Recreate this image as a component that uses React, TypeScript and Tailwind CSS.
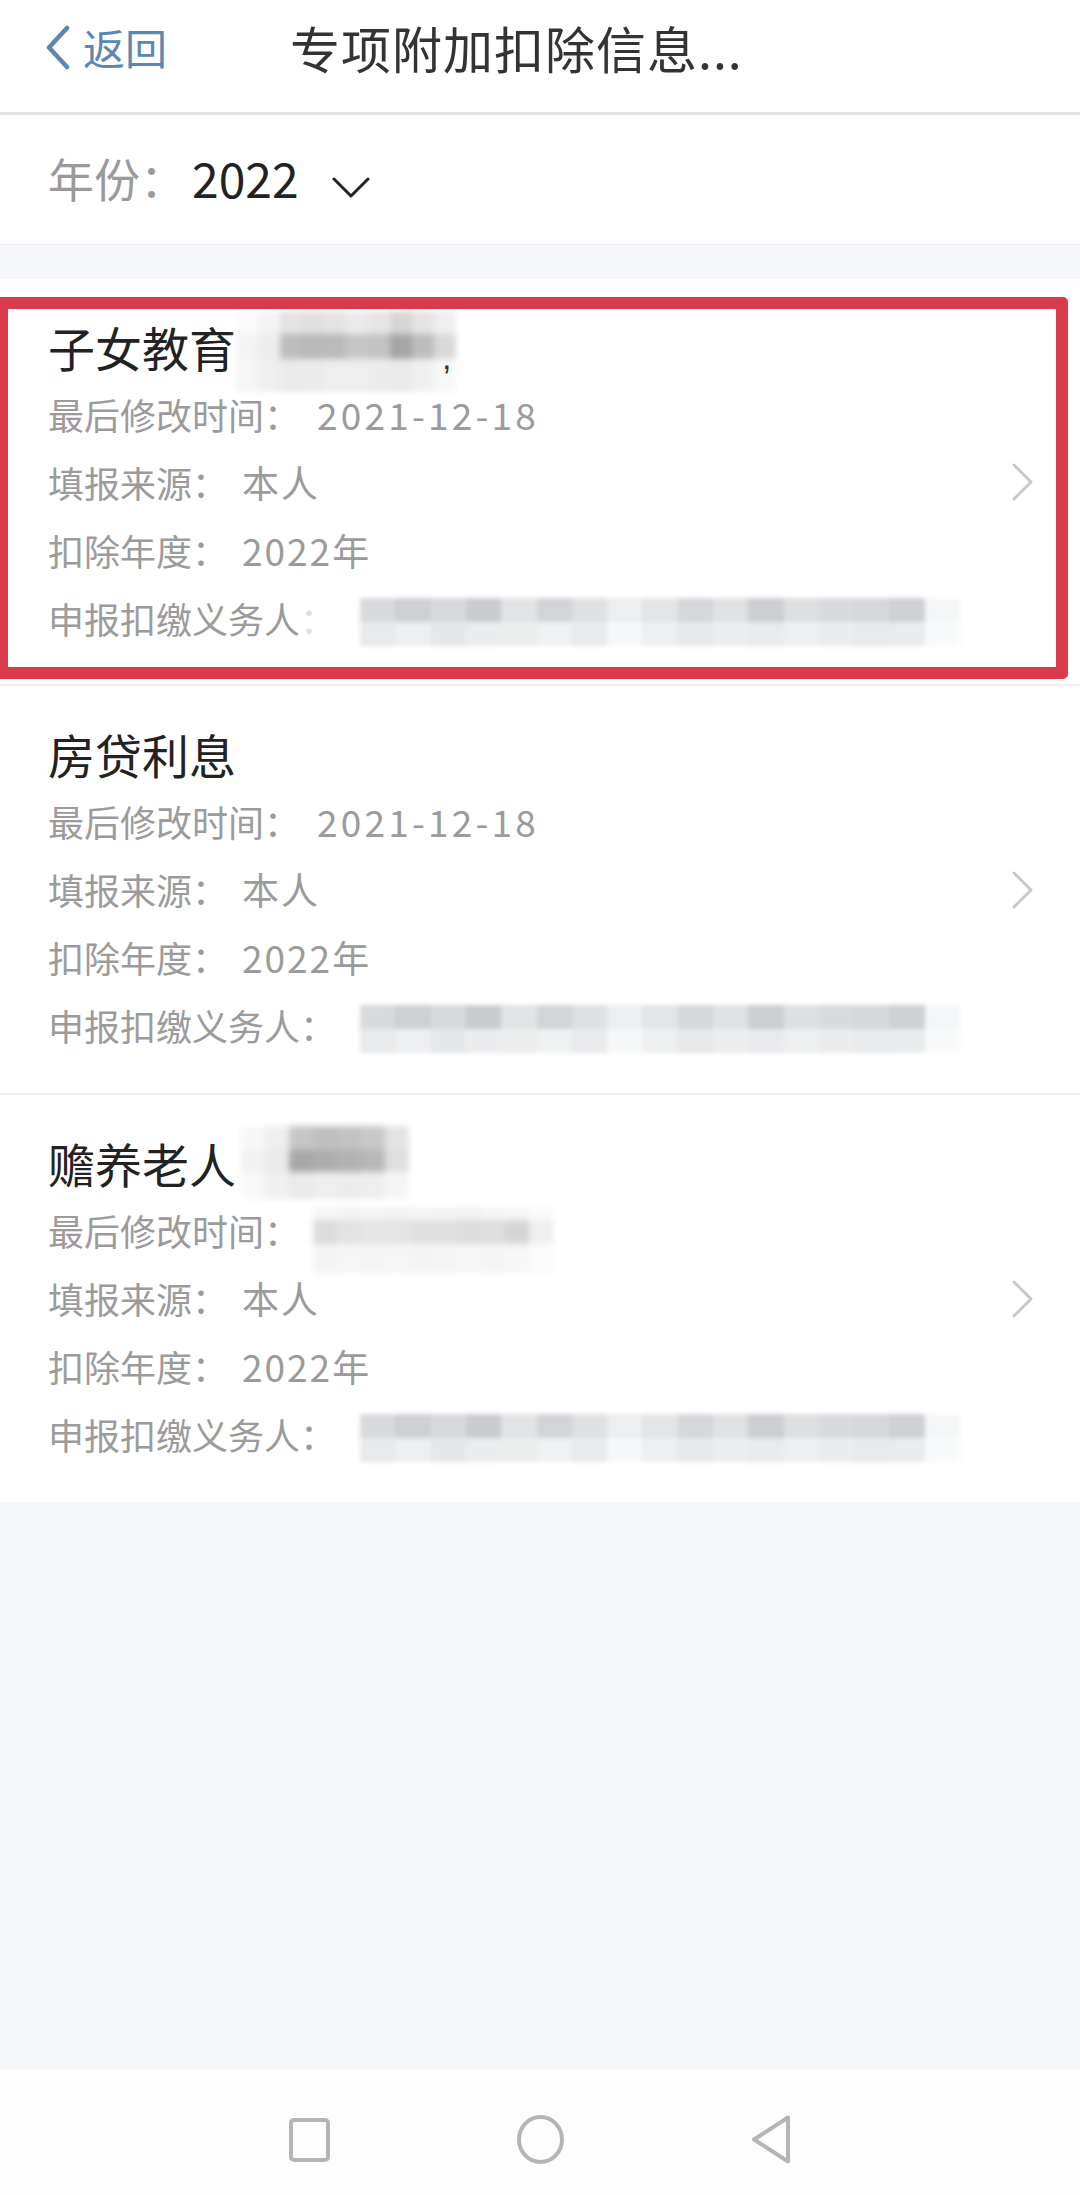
import React from 'react';

type MosaicRow = { h: string; cells: string[] };

function Mosaic({ grid, className }: { grid: MosaicRow[]; className: string }) {
  return (
    <div className={'flex shrink-0 flex-col ' + className}>
      {grid.map((r, i) => (
        <div key={i} className={'flex ' + r.h}>
          {r.cells.map((c, j) => (
            <div key={j} className={'flex-1 ' + c} />
          ))}
        </div>
      ))}
    </div>
  );
}

const titleMosaic1: MosaicRow[] = [
  {
    h: 'h-[23px]',
    cells: ['bg-[#fafafa]', 'bg-[#f4f4f4]', 'bg-[#e3e3e3]', 'bg-[#e0e0e0]', 'bg-[#e3e3e3]', 'bg-[#ebebeb]', 'bg-[#e6e6e6]', 'bg-[#d6d6d6]', 'bg-[#e4e4e4]', 'bg-[#efefef]'],
  },
  {
    h: 'h-[25px]',
    cells: ['bg-[#f4f4f4]', 'bg-[#ededed]', 'bg-[#bdbdbd]', 'bg-[#b9b9b9]', 'bg-[#bababa]', 'bg-[#c6c6c6]', 'bg-[#c3c3c3]', 'bg-[#a6a6a6]', 'bg-[#bdbdbd]', 'bg-[#d9d9d9]'],
  },
  {
    h: 'h-[33px]',
    cells: ['bg-[#f6f6f6]', 'bg-[#efefef]', 'bg-[#eaeaea]', 'bg-[#ececec]', 'bg-[#eeeeee]', 'bg-[#eeeeee]', 'bg-[#ececec]', 'bg-[#eaeaea]', 'bg-[#f0f0f0]', 'bg-[#f8f8f8]'],
  },
];

const titleMosaic3: MosaicRow[] = [
  {
    h: 'h-[24px]',
    cells: ['bg-[#f7f7f7]', 'bg-[#efefef]', 'bg-[#c6c6c6]', 'bg-[#bfbfbf]', 'bg-[#c2c2c2]', 'bg-[#c8c8c8]', 'bg-[#e3e3e3]'],
  },
  {
    h: 'h-[22px]',
    cells: ['bg-[#f2f2f2]', 'bg-[#eaeaea]', 'bg-[#a8a8a8]', 'bg-[#adadad]', 'bg-[#b2b2b2]', 'bg-[#b8b8b8]', 'bg-[#dfdfdf]'],
  },
  {
    h: 'h-[27px]',
    cells: ['bg-[#f8f8f8]', 'bg-[#f0f0f0]', 'bg-[#eaeaea]', 'bg-[#eeeeee]', 'bg-[#ececec]', 'bg-[#eeeeee]', 'bg-[#f5f5f5]'],
  },
];

const dateMosaic3: MosaicRow[] = [
  {
    h: 'h-[13px]',
    cells: ['bg-[#f6f6f6]', 'bg-[#f3f3f3]', 'bg-[#f4f4f4]', 'bg-[#f2f2f2]', 'bg-[#f4f4f4]', 'bg-[#f3f3f3]', 'bg-[#f2f2f2]', 'bg-[#f5f5f5]', 'bg-[#f6f6f6]', 'bg-[#fafafa]'],
  },
  {
    h: 'h-[24px]',
    cells: ['bg-[#dcdcdc]', 'bg-[#e2e2e2]', 'bg-[#e6e6e6]', 'bg-[#e4e4e4]', 'bg-[#e0e0e0]', 'bg-[#dfdfdf]', 'bg-[#dddddd]', 'bg-[#dedede]', 'bg-[#d5d5d5]', 'bg-[#efefef]'],
  },
  {
    h: 'h-[30px]',
    cells: ['bg-[#f4f4f4]', 'bg-[#f6f6f6]', 'bg-[#f5f5f5]', 'bg-[#f6f6f6]', 'bg-[#f4f4f4]', 'bg-[#f5f5f5]', 'bg-[#f7f7f7]', 'bg-[#f5f5f5]', 'bg-[#f7f7f7]', 'bg-[#fbfbfb]'],
  },
];

const agentMosaic: MosaicRow[] = [
  {
    h: 'h-[24px]',
    cells: [
      'bg-[#d9dadd]', 'bg-[#cfd0d3]', 'bg-[#d8d9dc]', 'bg-[#cbccd0]', 'bg-[#e2e3e5]', 'bg-[#d3d4d7]', 'bg-[#dfe0e2]', 'bg-[#edeeef]',
      'bg-[#e3e4e6]', 'bg-[#d6d7da]', 'bg-[#e0e1e3]', 'bg-[#cdced1]', 'bg-[#dedfe1]', 'bg-[#d9dadd]', 'bg-[#d7d8db]', 'bg-[#cfd0d3]', 'bg-[#f5f6f7]',
    ],
  },
  {
    h: 'h-[24px]',
    cells: [
      'bg-[#e8e9eb]', 'bg-[#eeeff1]', 'bg-[#e6e7e9]', 'bg-[#ebecee]', 'bg-[#eceded]', 'bg-[#f0f1f2]', 'bg-[#e9eaec]', 'bg-[#f6f7f8]',
      'bg-[#eeeff0]', 'bg-[#e7e8ea]', 'bg-[#ecedef]', 'bg-[#e9eaec]', 'bg-[#eeeff0]', 'bg-[#ebeced]', 'bg-[#e8e9eb]', 'bg-[#eaebed]', 'bg-[#f8f9fa]',
    ],
  },
];

function ChevronRight() {
  return (
    <svg width="23" height="38" viewBox="0 0 23 38" className="shrink-0" fill="none">
      <polyline points="3,2 20,19 3,36" stroke="#c8c8c8" strokeWidth="3" strokeLinecap="round" strokeLinejoin="round" />
    </svg>
  );
}

function Row({ label, children, labelTail }: { label: string; labelTail?: React.ReactNode; children?: React.ReactNode }) {
  return (
    <div className="flex h-[68px] items-center whitespace-nowrap text-[36px] leading-none text-[#9b9b9b]">
      <span>{label}</span>
      {labelTail}
      {children}
    </div>
  );
}

function Value({ children }: { children: React.ReactNode }) {
  return <span className="ml-[14px] text-[37px] tracking-[2px]">{children}</span>;
}

function DateValue({ children }: { children: React.ReactNode }) {
  return <span className="ml-[17px] text-[37px] tracking-[3.2px]">{children}</span>;
}

function Card({
  title,
  titleExtra,
  children,
  first,
  highlight,
}: {
  title: string;
  titleExtra?: React.ReactNode;
  children: React.ReactNode;
  first?: boolean;
  highlight?: boolean;
}) {
  return (
    <div
      className={
        first
          ? 'relative flex h-[405px] items-center bg-white pl-[48px] pr-[46px]'
          : 'relative flex h-[409px] items-center border-t-2 border-[#eeeeee] bg-white pl-[48px] pr-[46px]'
      }
    >
      <div className="flex flex-1 flex-col self-stretch pt-[33px]">
        <div className="flex h-[68px] items-center whitespace-nowrap text-[47px] leading-none text-[#222222]">
          <span>{title}</span>
          {titleExtra}
        </div>
        {children}
      </div>
      <ChevronRight />
      {highlight && (
        <div className="pointer-events-none absolute -left-[4px] top-[18px] right-[12px] bottom-[5px] rounded-r-[5px] border-[12px] border-[#d93b4b]" />
      )}
    </div>
  );
}

export default function App() {
  return (
    <div className="flex h-[2195px] w-full flex-col overflow-hidden bg-[#f5f7fa] font-['Noto_Sans_CJK_SC','Noto_Sans',sans-serif]">
      {/* Header */}
      <div className="flex h-[115px] shrink-0 items-center border-b-[3px] border-[#e3e3e3] bg-white pb-[18px]">
        <div className="flex items-center pl-[45px]">
          <svg width="25" height="45" viewBox="0 0 25 45" fill="none">
            <polyline points="22,3 4,22.5 22,42" stroke="#5b87b2" strokeWidth="4.5" strokeLinecap="round" strokeLinejoin="round" />
          </svg>
          <span className="ml-[13px] text-[42px] leading-none text-[#5b87b2]">返回</span>
        </div>
        <div className="ml-[123px] whitespace-nowrap text-[50px] leading-none tracking-[1px] text-[#333333]">专项附加扣除信息...</div>
      </div>

      {/* Year selector */}
      <div className="flex h-[130px] shrink-0 items-center border-b border-[#eceef0] bg-white pb-[6px] pl-[48px]">
        <span className="text-[46px] leading-none text-[#9a9a9a]">年份：</span>
        <span className="ml-[6px] text-[48px] leading-none text-[#222222]">2022</span>
        <svg width="38" height="22" viewBox="0 0 38 22" fill="none" className="ml-[33px] mt-[20px]">
          <polyline points="2,3 19,20 36,3" stroke="#222222" strokeWidth="3" strokeLinecap="round" strokeLinejoin="round" />
        </svg>
      </div>

      <div className="h-[34px] shrink-0" />

      {/* Cards */}
      <div className="flex shrink-0 flex-col">
        <Card
          first
          highlight
          title="子女教育"
          titleExtra={
            <>
              <Mosaic grid={titleMosaic1} className="mt-[10px] w-[220px] blur-[3px]" />
              <span className="relative z-10 -ml-[14px] mt-[22px] font-['Liberation_Sans',sans-serif] text-[34px] text-[#333333]">,</span>
            </>
          }
        >
          <Row label="最后修改时间：">
            <DateValue>2021-12-18</DateValue>
          </Row>
          <Row label="填报来源：">
            <Value>本人</Value>
          </Row>
          <Row label="扣除年度：">
            <Value>2022年</Value>
          </Row>
          <Row label="申报扣缴义务人" labelTail={<span className="text-[#dedede]">：</span>}>
            <Mosaic grid={agentMosaic} className="ml-[24px] mt-[8px] w-[600px] blur-[2px]" />
          </Row>
        </Card>

        <Card title="房贷利息">
          <Row label="最后修改时间：">
            <DateValue>2021-12-18</DateValue>
          </Row>
          <Row label="填报来源：">
            <Value>本人</Value>
          </Row>
          <Row label="扣除年度：">
            <Value>2022年</Value>
          </Row>
          <Row label="申报扣缴义务人：">
            <Mosaic grid={agentMosaic} className="ml-[24px] mt-[8px] w-[600px] blur-[2px]" />
          </Row>
        </Card>

        <Card title="赡养老人" titleExtra={<Mosaic grid={titleMosaic3} className="ml-[5px] w-[168px] blur-[3px]" />}>
          <Row label="最后修改时间：">
            <Mosaic grid={dateMosaic3} className="ml-[13px] mt-[20px] w-[240px] blur-[3px]" />
          </Row>
          <Row label="填报来源：">
            <Value>本人</Value>
          </Row>
          <Row label="扣除年度：">
            <Value>2022年</Value>
          </Row>
          <Row label="申报扣缴义务人：">
            <Mosaic grid={agentMosaic} className="ml-[24px] mt-[8px] w-[600px] blur-[2px]" />
          </Row>
        </Card>
      </div>

      <div className="flex-1" />

      {/* Bottom nav */}
      <div className="flex h-[125px] shrink-0 items-center justify-center bg-[#fdfdfd] pt-[14px]">
        <div className="flex w-[231px] justify-center">
          <svg width="41" height="44" viewBox="0 0 41 44" fill="none">
            <rect x="2" y="2" width="37" height="40" rx="3" stroke="#b5b5b5" strokeWidth="4" />
          </svg>
        </div>
        <div className="flex w-[231px] justify-center">
          <svg width="47" height="49" viewBox="0 0 47 49" fill="none">
            <ellipse cx="23.5" cy="24.5" rx="21.5" ry="22.5" stroke="#b5b5b5" strokeWidth="4" />
          </svg>
        </div>
        <div className="flex w-[231px] justify-center">
          <svg width="40" height="49" viewBox="0 0 40 49" fill="none">
            <polygon points="37,2.5 3,24.5 37,46.5" stroke="#b5b5b5" strokeWidth="4" strokeLinejoin="round" />
          </svg>
        </div>
      </div>
    </div>
  );
}
